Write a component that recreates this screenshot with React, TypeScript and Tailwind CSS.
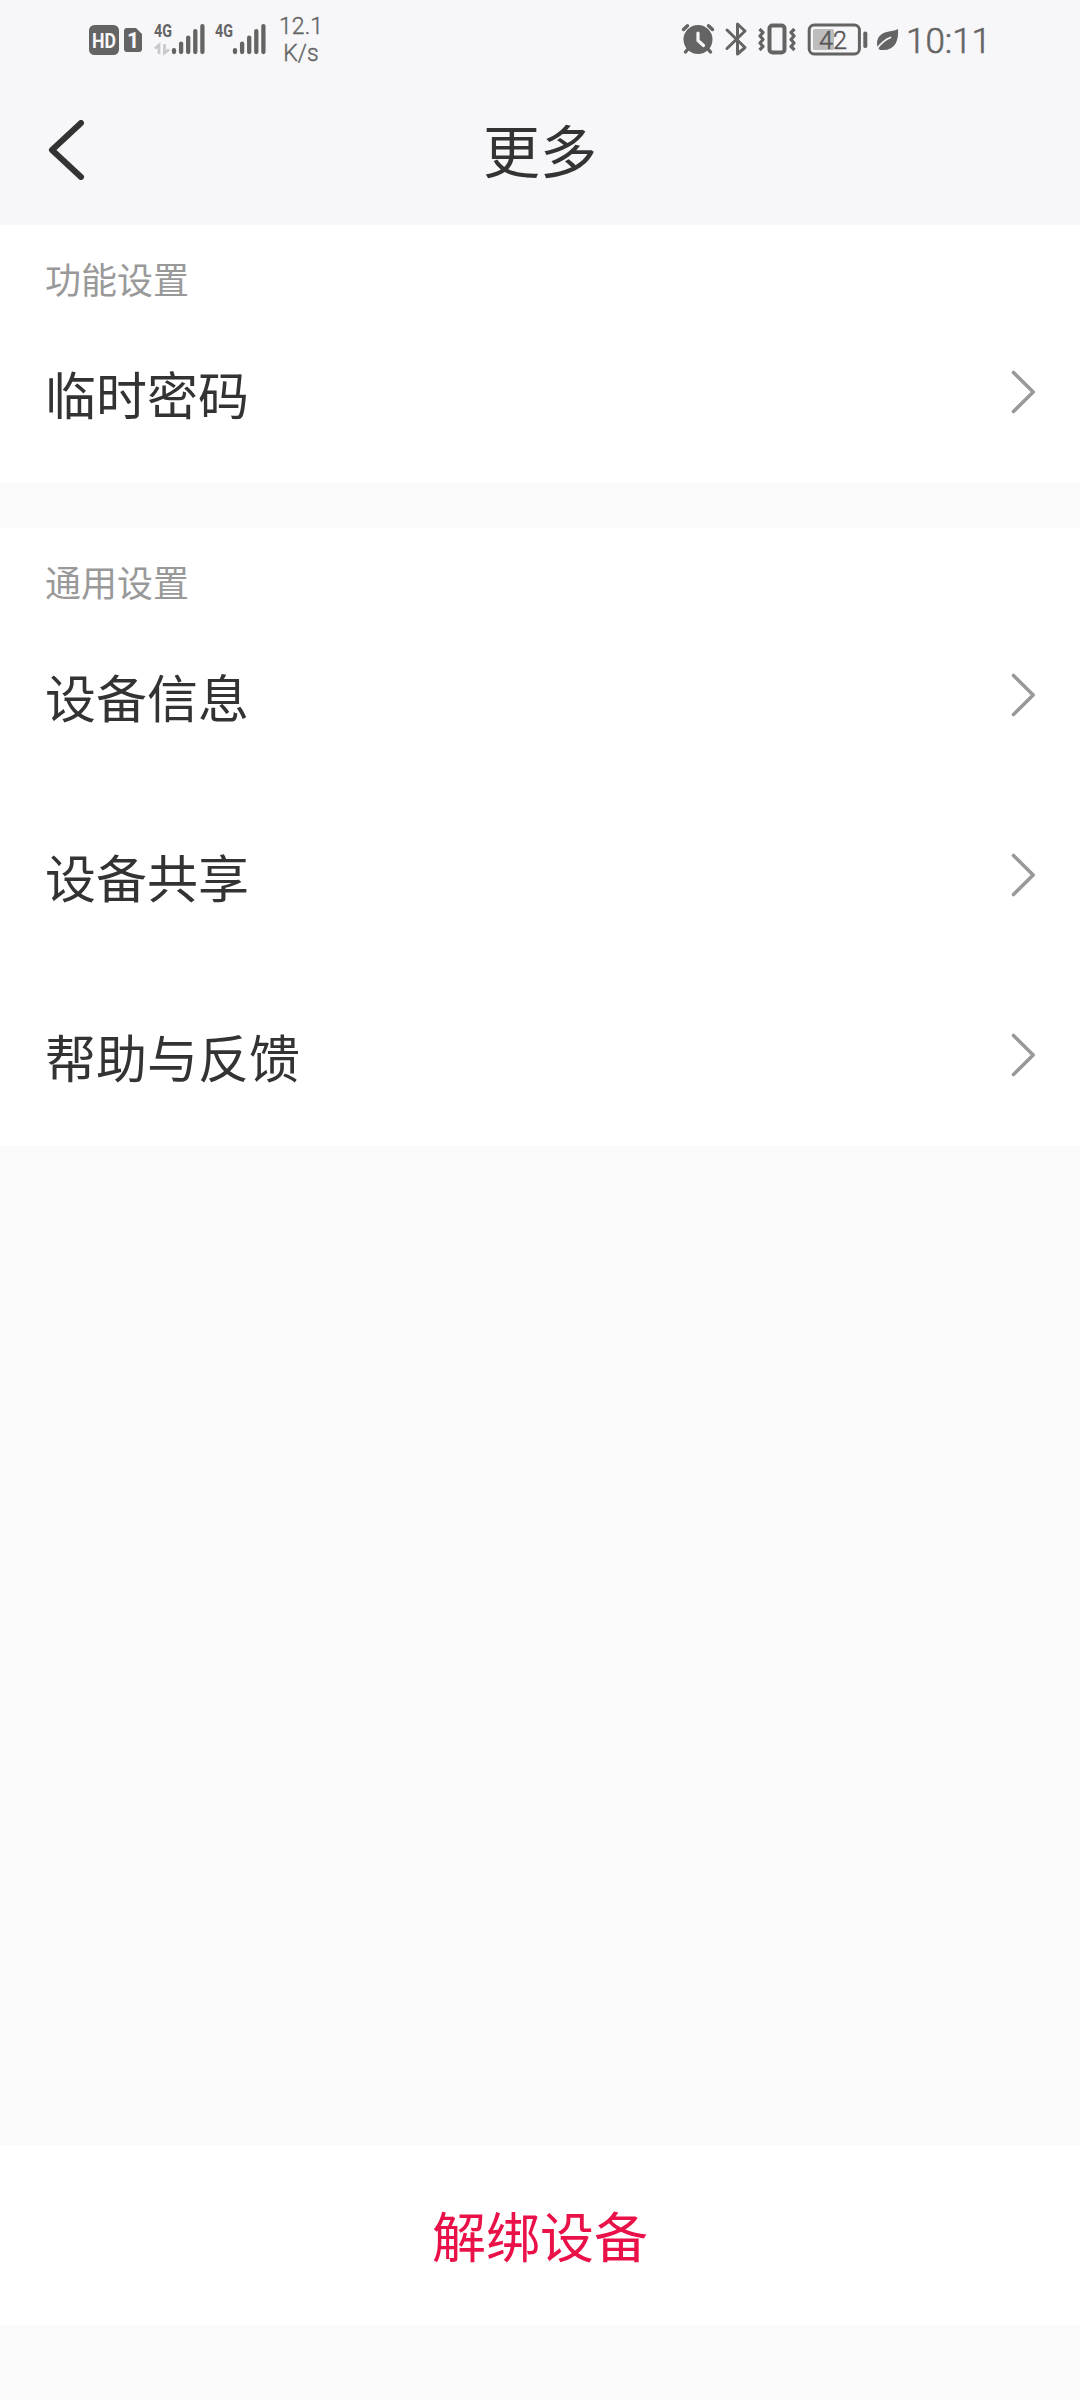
import React from "react";

const INK = "#646464";

// Each status icon is a vertical slice of the 80px status bar, drawn in the bar's own coordinates.
function Slice({ x, w, children }: { x: number; w: number; children: React.ReactNode }) {
  return (
    <svg width={w} height={80} viewBox={`${x} 0 ${w} 80`} fill="none" className="block shrink-0">
      {children}
    </svg>
  );
}

function Signal({ x, arrows }: { x: number; arrows?: boolean }) {
  const tops = [48, 41.5, 35.5, 29, 24];
  return (
    <Slice x={0} w={61}>
      <text x={x} y={37} fontSize={18.5} fontWeight={700} fill={INK} textLength={18} lengthAdjust="spacingAndGlyphs">
        4G
      </text>
      {arrows && (
        <path d="M155 48.500L159 45V54M164.500 44V53L169 49.500" transform={`translate(${x - 154} 0)`} stroke="#c9c9cb" strokeWidth={2.8} />
      )}
      {tops.map((t, i) => (
        <path key={t} d={`M${x + 20 + i * 7.1} ${t + 2.1}V${52}`} stroke={INK} strokeWidth={4.3} strokeLinecap="round" />
      ))}
    </Slice>
  );
}

function StatusBar() {
  return (
    <div className="flex h-20 justify-between pl-[86px] pr-[90px] text-[#646464]">
      <div className="flex">
        <Slice x={86} w={62}>
          <rect x={89} y={25} width={30} height={30} rx={5.5} fill={INK} />
          <text x={92} y={47.5} fontSize={20} fontWeight={700} fill="#f7f7f9" textLength={24} lengthAdjust="spacingAndGlyphs">
            HD
          </text>
          <path d="M127 28H136L142 34V49Q142 52 139 52H127Q124 52 124 49V31Q124 28 127 28Z" fill={INK} />
          <text x={127} y={47.7} fontSize={21.5} fontWeight={700} fill="#f7f7f9">
            1
          </text>
        </Slice>
        <Signal x={6} arrows />
        <Signal x={6} />
        <div className="mt-[13px] w-[62px] text-center text-[23px] font-light leading-[27px] [-webkit-text-stroke:0.4px_#646464]">
          <div>12.1</div>
          <div>K/s</div>
        </div>
      </div>
      <div className="flex">
        <Slice x={678} w={40}>
          <circle cx={698} cy={39.5} r={14.5} fill={INK} />
          <path d="M683.5 29.5L687.5 25.700M712.500 29.500L708.500 25.700M688 49L685.500 52M708 49L710.500 52" stroke={INK} strokeWidth={3.4} strokeLinecap="round" />
          <path d="M698 33V40.500L703.5 45.5" stroke="#f7f7f9" strokeWidth={3.2} strokeLinecap="round" strokeLinejoin="round" />
        </Slice>
        <Slice x={718} w={36}>
          <path d="M727 30L745 47.5L737.5 54V24L745 31L727 48.5" stroke={INK} strokeWidth={3} strokeLinecap="round" strokeLinejoin="round" />
        </Slice>
        <Slice x={754} w={48}>
          <rect x={769.5} y={25.5} width={15} height={27} rx={3} stroke={INK} strokeWidth={4} />
          <path d="M759.500 29L763 32.500L760 36L763 39.500L760 43L763 46.500L759.500 50M794.500 29L791 32.500L794 36L791 39.500L794 43L791 46.500L794.500 50" stroke={INK} strokeWidth={3.2} strokeLinejoin="round" />
        </Slice>
        <Slice x={802} w={70}>
          <rect x={809.2} y={25} width={50.2} height={29} rx={5} stroke={INK} strokeWidth={3} />
          <rect x={813} y={29} width={21} height={21} rx={1.5} fill="#bdbdbe" />
          <text x={819} y={49} fontSize={26.5} fontWeight={300} fill="#555" stroke="#555" strokeWidth={0.5} textLength={28} lengthAdjust="spacingAndGlyphs">
            42
          </text>
          <rect x={863.3} y={31.5} width={4} height={16.5} rx={1.8} fill={INK} />
        </Slice>
        <Slice x={872} w={34}>
          <path d="M898 29C899 42 894 50 883.500 50H880C877 48 876.500 43 877.500 40C879.500 33 887 31.500 892 31Q895.500 30.500 898 29Z" fill={INK} />
          <path d="M877 48.500Q883 40.500 890.500 37.500" stroke="#f7f7f9" strokeWidth={1.7} strokeLinecap="round" />
        </Slice>
        <div className="mt-[21px] w-[84px] whitespace-nowrap text-[35px] font-light leading-[41px] [-webkit-text-stroke:0.6px_#646464]">10:11</div>
      </div>
    </div>
  );
}

function Header() {
  return (
    <header className="h-[225px] bg-[#f7f7f9]">
      <StatusBar />
      <div className="grid h-[145px] grid-cols-[90px_1fr_90px] text-[#333]">
        <svg width={40} height={60} viewBox="46 120 40 60" fill="none" className="ml-[46px] mt-[40px]">
          <path d="M81 123L52 150L81 177" stroke="#333" strokeWidth={6} strokeLinecap="round" strokeLinejoin="round" />
        </svg>
        <h1 className="mt-[34px] text-center text-[57px] leading-[80px]">更多</h1>
      </div>
    </header>
  );
}

function Row({ label }: { label: string }) {
  return (
    <div className="flex h-[180px] items-center justify-between pl-[45px] pr-[42px]">
      <span className="pt-[10px] text-[51px] leading-[76px] text-[#333]">{label}</span>
      <svg width={28} height={44} viewBox="1010 370 28 44" fill="none" className="-mt-[2px]">
        <path d="M1013.500 372.500L1033.200 392L1013.500 411.500" stroke="#999" strokeWidth={3.600} strokeLinecap="round" strokeLinejoin="round" />
      </svg>
    </div>
  );
}

function Section({ title, rows }: { title: string; rows: string[] }) {
  return (
    <section className="bg-white">
      <h2 className="h-[78px] pl-[45px] pt-[31px] text-[36px] leading-[52px] text-[#999]">{title}</h2>
      {rows.map((r) => (
        <Row key={r} label={r} />
      ))}
    </section>
  );
}

export default function App() {
  return (
    <main className="flex h-[2400px] w-[1080px] flex-col bg-[#fafafa] font-['Roboto','Noto_Sans_CJK_SC',sans-serif]">
      <Header />
      <div className="flex flex-col gap-[45px]">
        <Section title="功能设置" rows={["临时密码"]} />
        <Section title="通用设置" rows={["设备信息", "设备共享", "帮助与反馈"]} />
      </div>
      <button className="mt-auto mb-[75px] flex h-[180px] items-center justify-center bg-white pt-[9px] text-[54px] text-[#ea1048]">
        解绑设备
      </button>
    </main>
  );
}
